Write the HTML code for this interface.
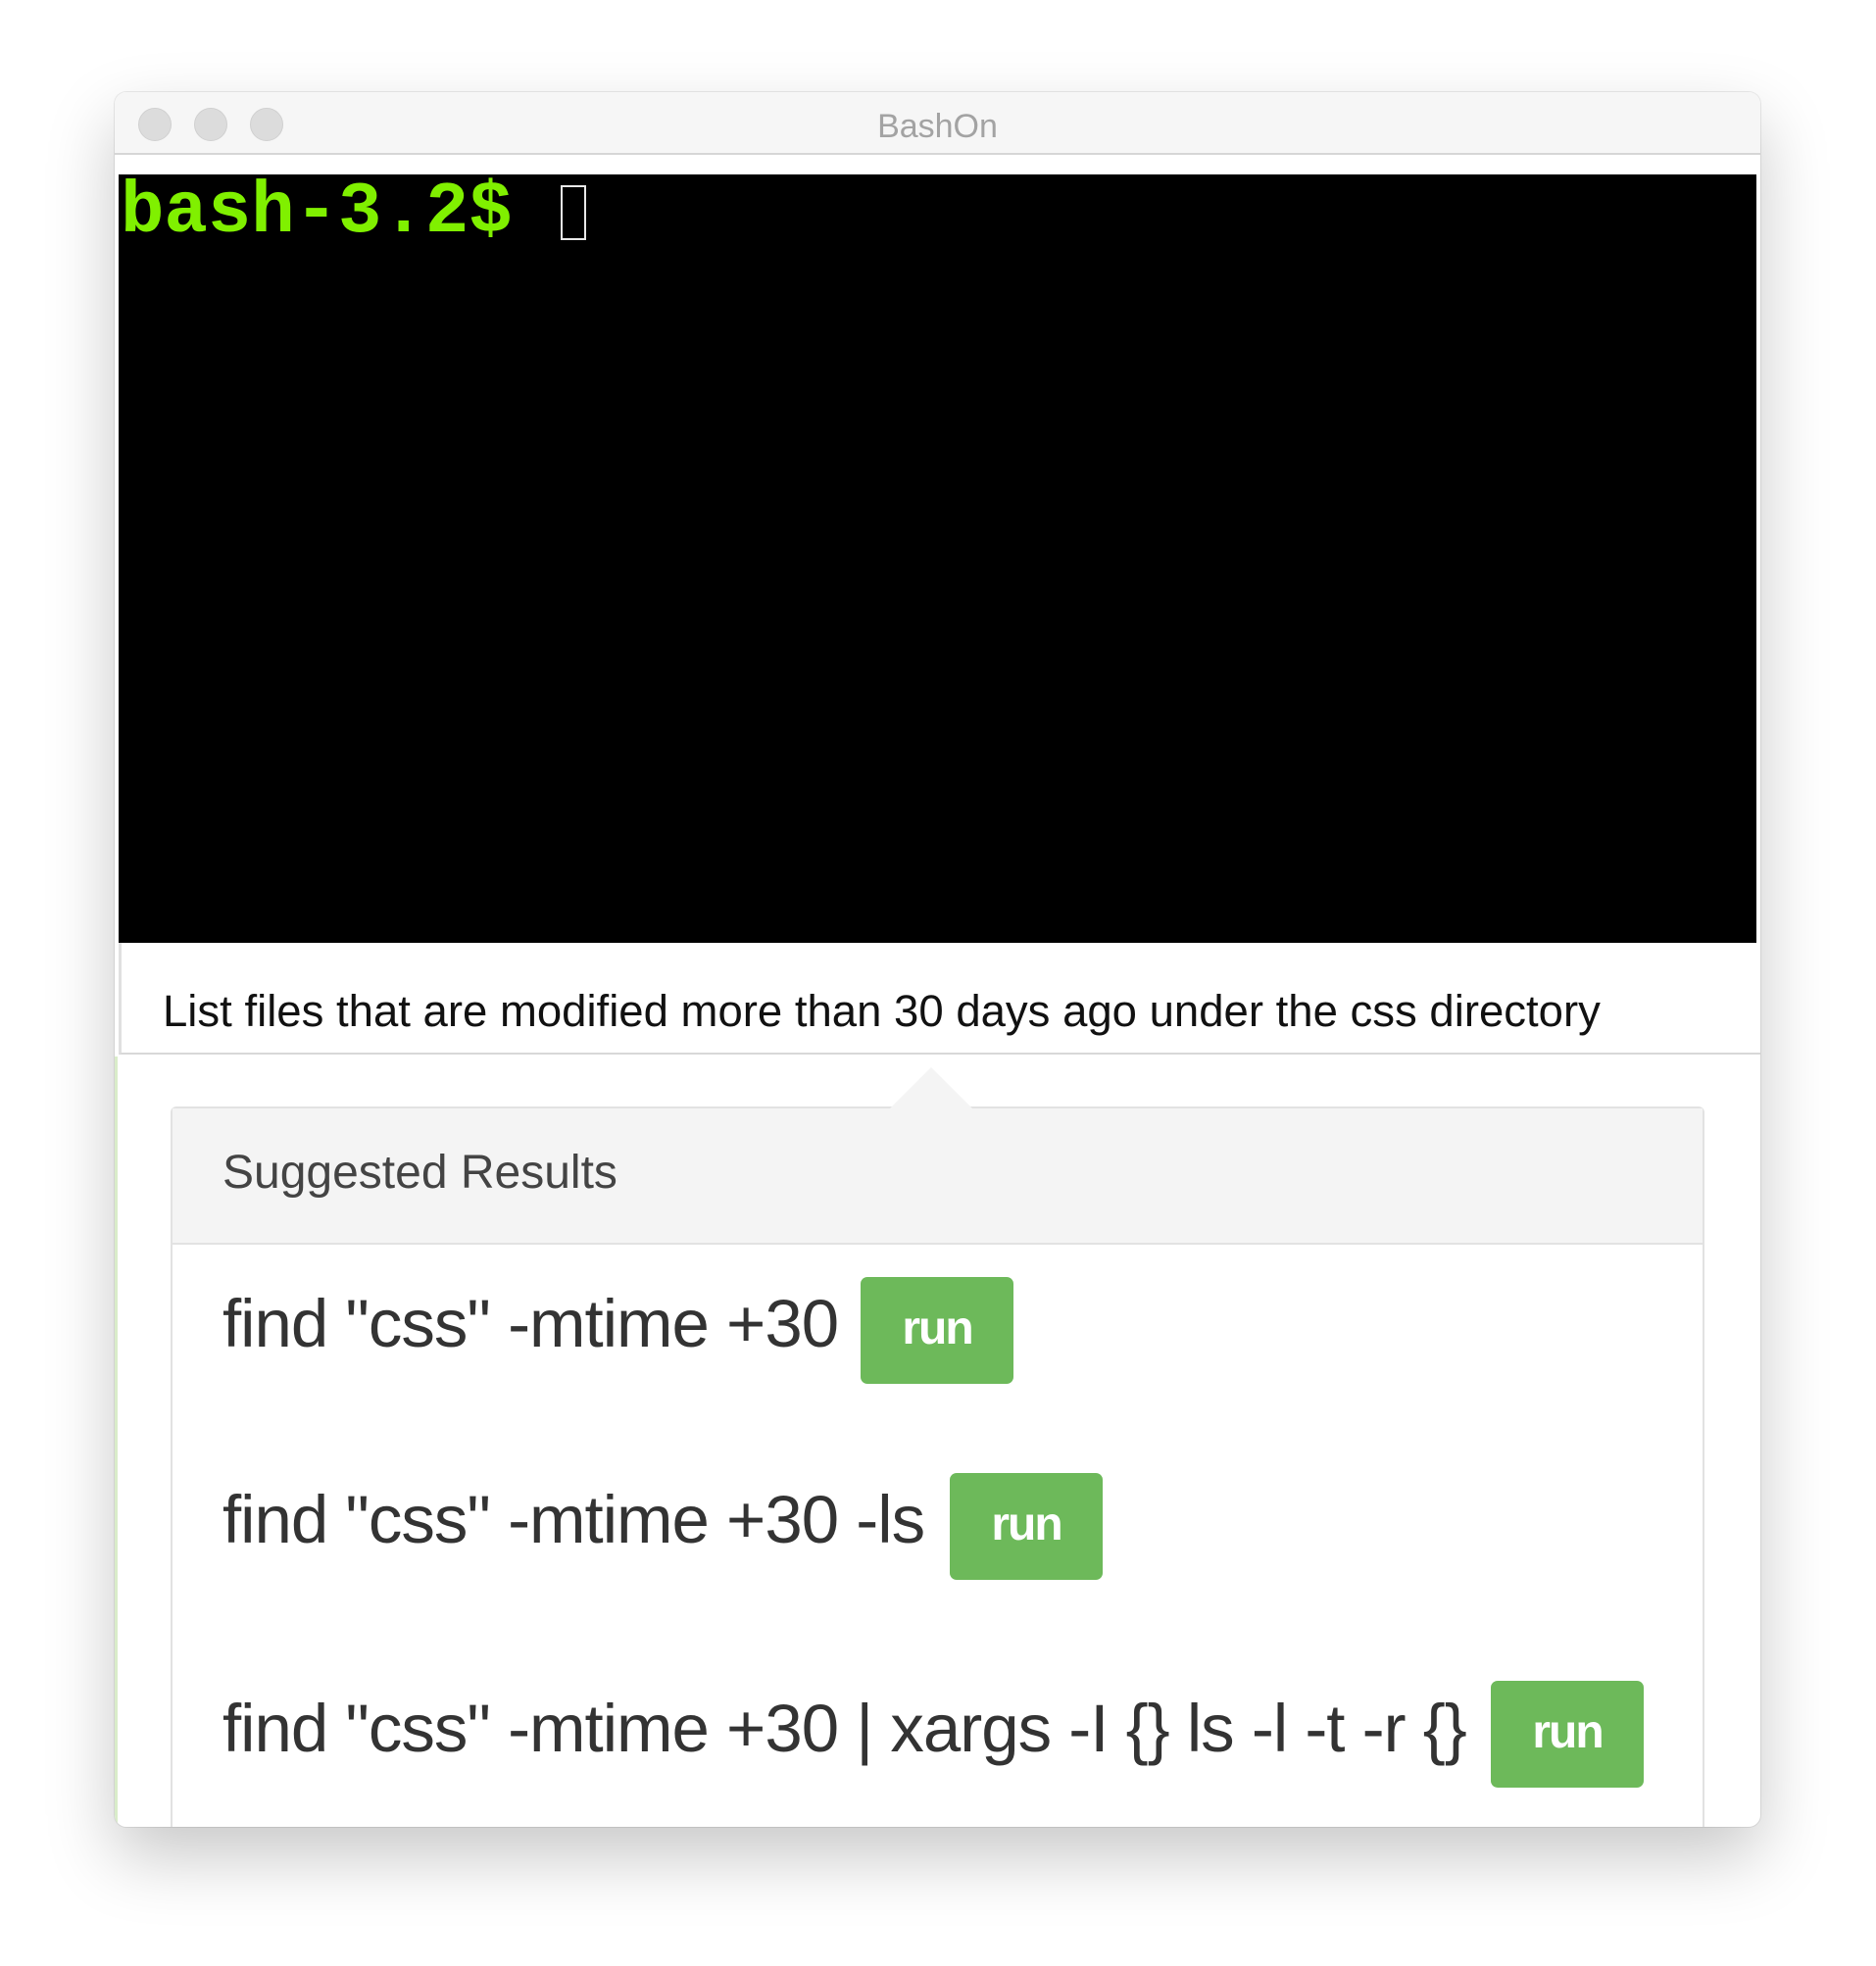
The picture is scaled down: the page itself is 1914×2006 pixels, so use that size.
<!DOCTYPE html>
<html><head><meta charset="utf-8"><style>
html,body{margin:0;padding:0;background:#fff;width:1914px;height:2006px;overflow:hidden;position:relative;font-family:"Liberation Sans",Arial,sans-serif}
.win{position:absolute;left:117px;top:94px;width:1679px;height:1770px;border-radius:12px;background:#fff;overflow:hidden;box-shadow:0 30px 70px rgba(0,0,0,0.22),0 0 0 1px rgba(0,0,0,0.08);}
.tb{position:absolute;left:0;top:0;width:100%;height:62px;background:#f6f6f6;border-bottom:2px solid #d6d6d6}
.dot{position:absolute;top:16px;width:34px;height:34px;border-radius:50%;background:#dcdcdc;border:1px solid #d0d0d0;box-sizing:border-box}
.title{position:absolute;left:0;right:0;top:16px;text-align:center;font-size:34px;color:#a3a3a3}
.term{position:absolute;left:4px;top:84px;width:1671px;height:784px;background:#000}
.bash{position:absolute;left:2px;top:-6px;font-family:"Liberation Mono","Courier New",monospace;font-weight:bold;font-size:74px;color:#80f000;line-height:90px}
.cur{position:absolute;left:451px;top:11px;width:26px;height:56px;border:2px solid #e8e8e8;box-sizing:border-box}
.desc{position:absolute;left:4px;top:868px;width:1675px;height:114px;background:#fff;border-bottom:2px solid #d8d8d8;border-left:3px solid #e0e0e0;box-sizing:border-box}
.desc span{position:absolute;left:42px;top:44px;font-size:45.5px;color:#111;white-space:nowrap}
.lb{position:absolute;left:0;top:984px;width:3px;height:800px;background:#d9ecc9}
.card{position:absolute;left:57px;top:1035px;width:1565px;height:800px;border:2px solid #e2e2e2;border-radius:6px;background:#fff;box-sizing:border-box}
.ch{position:absolute;left:0;top:0;right:0;height:137px;background:#f4f4f4;border-bottom:2px solid #e2e2e2}
.ch span{position:absolute;left:51px;top:38px;font-size:48px;color:#444}
.arrow{position:absolute;left:730px;top:-7px;width:0;height:0;border-left:44px solid transparent;border-right:44px solid transparent;border-bottom:44px solid #f4f4f4;transform:translate(0,-35px)}
.row{position:absolute;left:51px;font-size:69px;color:#333;white-space:nowrap;letter-spacing:-1px}
.btn{position:absolute;width:156px;height:109px;background:#6db95a;border-radius:7px;color:#fff;font-size:48px;font-weight:bold;text-align:center;line-height:106px;letter-spacing:-2px}
</style></head><body>
<div class="win">
  <div class="tb">
    <div class="dot" style="left:24px"></div>
    <div class="dot" style="left:81px"></div>
    <div class="dot" style="left:138px"></div>
    <div class="title">BashOn</div>
  </div>
  <div class="term"><div class="bash">bash-3.2$</div><div class="cur"></div></div>
  <div class="desc"><span>List files that are modified more than 30 days ago under the css directory</span></div>
  <div class="lb"></div>
  <div class="card">
    <div class="arrow"></div>
    <div class="ch"><span>Suggested Results</span></div>
    <div class="row" style="top:180px">find "css" -mtime +30</div>
    <div class="btn" style="left:702px;top:172px">run</div>
    <div class="row" style="top:380px">find "css" -mtime +30 -ls</div>
    <div class="btn" style="left:793px;top:372px">run</div>
    <div class="row" style="top:593px">find "css" -mtime +30 | xargs -I {} ls -l -t -r {}</div>
    <div class="btn" style="left:1345px;top:584px">run</div>
  </div>
</div>
</body></html>
